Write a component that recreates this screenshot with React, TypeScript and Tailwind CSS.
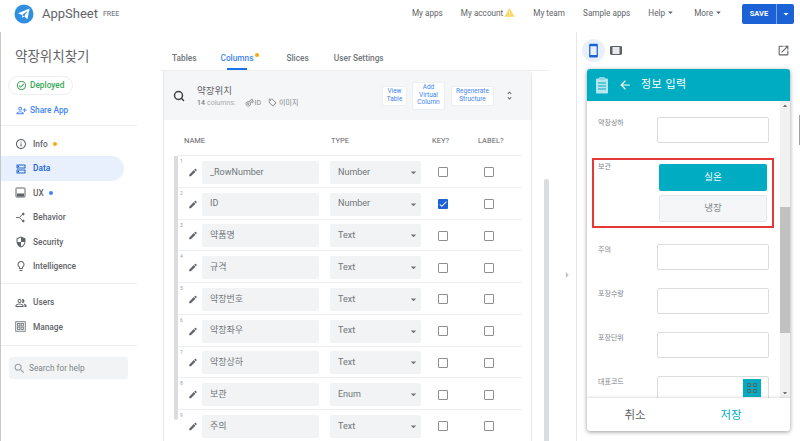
import type { ReactNode } from "react";
import { Search } from "lucide-react";
import {
  MdArrowBack,
  MdArrowDropDown,
  MdArrowDropUp,
  MdArrowRight,
  MdCheck,
  MdEdit,
  MdInfoOutline,
  MdLightbulbOutline,
  MdOpenInNew,
  MdOutlineCheckCircle,
  MdOutlineDns,
  MdOutlineLocalOffer,
  MdOutlineVpnKey,
  MdPersonAddAlt,
  MdSearch,
  MdSecurity,
  MdSmartphone,
  MdUnfoldMore,
  MdWarning,
  MdOutlinePeopleAlt,
} from "react-icons/md";

const FONT = "[font-family:Roboto,'Noto_Sans_CJK_KR',sans-serif]";

const TOP_NAV = ["My apps", "My account", "My team", "Sample apps", "Help", "More"];

const ROWS = [
  { n: 1, name: "_RowNumber", type: "Number" },
  { n: 2, name: "ID", type: "Number", key: true },
  { n: 3, name: "약품명", type: "Text" },
  { n: 4, name: "규격", type: "Text" },
  { n: 5, name: "약장번호", type: "Text" },
  { n: 6, name: "약장좌우", type: "Text" },
  { n: 7, name: "약장상하", type: "Text" },
  { n: 8, name: "보관", type: "Enum" },
  { n: 9, name: "주의", type: "Text" },
];

function Logo() {
  return (
    <svg width="20" height="20" viewBox="0 0 20 20">
      <circle cx="10" cy="10" r="9.5" fill="#2f8fe0" />
      <path d="M4 9.2 15.6 4.6 13.4 15.2 10.2 12.2 8.4 14 8 11z" fill="#fff" />
      <path d="M8 11 13.6 7 10.2 12.2z" fill="#2f8fe0" />
    </svg>
  );
}

function BehaviorIcon() {
  return (
    <svg width="11" height="11" viewBox="0 0 12 12" fill="none" stroke="#5f6368" strokeWidth="1">
      <path d="M1 6h4l3-3.5M5 6l3 3.5" />
      <circle cx="9" cy="2.2" r="1" fill="#5f6368" />
      <circle cx="9" cy="9.8" r="1" fill="#5f6368" />
    </svg>
  );
}

function UxIcon() {
  return (
    <svg width="11" height="11" viewBox="0 0 11 11">
      <rect x="1" y="1" width="9" height="9" rx="0.5" fill="none" stroke="#5f6368" />
      <rect x="2" y="6.5" width="7" height="3" fill="#5f6368" />
    </svg>
  );
}

function ManageIcon() {
  return (
    <svg width="11" height="11" viewBox="0 0 11 11" fill="none" stroke="#70757a" strokeWidth="0.8">
      <rect x="0.7" y="0.7" width="9.6" height="9.6" fill="#eceef0" />
      <rect x="2.5" y="2.5" width="2.4" height="2.4" />
      <rect x="6.1" y="2.5" width="2.4" height="2.4" />
      <rect x="2.5" y="6.1" width="2.4" height="2.4" />
      <rect x="6.1" y="6.1" width="2.4" height="2.4" />
    </svg>
  );
}

function TabletIcon() {
  return (
    <svg width="12" height="9" viewBox="0 0 12 9" className="ml-[5px]">
      <rect x="0.5" y="0.5" width="11" height="8" rx="1" fill="#e8eaed" stroke="#5f6368" />
      <rect x="0" y="0.5" width="2.5" height="8" rx="0.5" fill="#5f6368" />
      <rect x="9.5" y="0.5" width="2.5" height="8" rx="0.5" fill="#5f6368" />
    </svg>
  );
}

function NavItem({ icon, label, dot, active }: { icon: ReactNode; label: string; dot?: string; active?: boolean }) {
  return (
    <div
      className={`flex h-[24.4px] w-[123px] items-center rounded-r-full pl-[14px] text-[8.3px] font-medium ${
        active ? "bg-[#e8f0fe] text-[#1a62d6]" : "text-[#5f6368]"
      }`}
    >
      <span className="flex w-[18px] text-[12px]">{icon}</span>
      {label}
      {dot && <span className={`ml-[5px] h-[4px] w-[4px] rounded-full ${dot}`} />}
    </div>
  );
}

function Sidebar() {
  return (
    <aside className="flex w-[137px] shrink-0 flex-col border-l border-[#c8c8c8]">
      <h1 className="mt-[14px] ml-[14px] text-[13.5px] leading-[20px] font-normal text-[#5f6368]">약장위치찾기</h1>
      <div className="mt-[10px] ml-[7px] flex h-[19px] w-[65px] items-center gap-[3px] rounded-full border border-[#eceef0] pl-[7px] text-[8.3px] font-medium text-[#34a853]">
        <MdOutlineCheckCircle className="text-[11px]" />
        Deployed
      </div>
      <div className="mt-[8px] ml-[15px] flex h-[14px] items-center gap-[3px] text-[8.3px] font-medium text-[#4285f4]">
        <MdPersonAddAlt className="text-[11px]" />
        Share App
      </div>
      <div className="mt-[8px] h-px bg-[#eceef0]" />
      <div className="mt-[6px]">
        <NavItem icon={<MdInfoOutline />} label="Info" dot="bg-[#f9ab00]" />
        <NavItem icon={<MdOutlineDns />} label="Data" active />
        <NavItem icon={<UxIcon />} label="UX" dot="bg-[#4285f4]" />
        <NavItem icon={<BehaviorIcon />} label="Behavior" />
        <NavItem icon={<MdSecurity />} label="Security" />
        <NavItem icon={<MdLightbulbOutline />} label="Intelligence" />
      </div>
      <div className="mt-[5px] h-px bg-[#eceef0]" />
      <div className="mt-[6px]">
        <NavItem icon={<MdOutlinePeopleAlt />} label="Users" />
        <NavItem icon={<ManageIcon />} label="Manage" />
      </div>
      <div className="mt-[6px] h-px bg-[#eceef0]" />
      <div className="mt-[11px] ml-[8px] flex h-[22px] w-[119px] items-center gap-[3px] rounded-[3px] bg-[#f1f3f4] pl-[4px] text-[8.3px] text-[#80868b]">
        <MdSearch className="text-[13px] text-[#9aa0a6]" />
        Search for help
      </div>
    </aside>
  );
}

function Checkbox({ checked }: { checked?: boolean }) {
  return checked ? (
    <span className="flex h-[10px] w-[10px] items-center justify-center rounded-[1px] bg-[#1a62d6] text-[10px] text-white">
      <MdCheck />
    </span>
  ) : (
    <span className="h-[10px] w-[10px] rounded-[1px] border-[1.5px] border-[#8f8f8f]" />
  );
}

function Row({ n, name, type, checked }: { n: number; name: string; type: string; checked?: boolean }) {
  return (
    <div className="relative flex h-[31.75px] w-[344px] shrink-0 items-center border-b border-[#eeeff0] pt-[2px]">
      <span className="absolute top-[2px] left-[2px] text-[5px] leading-[7px] text-[#9aa0a6]">{n}</span>
      <MdEdit className="ml-[10px] w-[10px] text-[11px] text-[#5f6368]" />
      <div className="ml-[4px] flex h-[23px] w-[117px] items-center rounded-[2px] bg-[#f1f3f4] pl-[8px] text-[9px] text-[#70757a]">
        {name}
      </div>
      <div className="ml-[11px] flex h-[23px] w-[91px] items-center justify-between rounded-[2px] bg-[#f1f3f4] pl-[8px] text-[9px] text-[#70757a]">
        {type}
        <MdArrowDropDown className="mr-[1px] text-[13px] text-[#70757a]" />
      </div>
      <span className="ml-[17px] flex">
        <Checkbox checked={checked} />
      </span>
      <span className="ml-[36px] flex">
        <Checkbox />
      </span>
    </div>
  );
}

function HeaderButton({ children, className }: { children: ReactNode; className: string }) {
  return (
    <div
      className={`flex items-center justify-center rounded-[2px] border border-[#eceef0] bg-white text-center text-[6.5px] leading-[7.5px] text-[#4285f4] ${className}`}
    >
      {children}
    </div>
  );
}

function Center() {
  return (
    <main className="relative flex w-[440px] shrink-0 flex-col border-r border-[#e6e7e9]">
      <div className="ml-[23px] w-[390px]">
        <div className="flex h-[39px] items-end border-b border-[#eceef0] text-[8.3px] font-medium text-[#70757a]">
          <span className="mb-[6px] ml-[12px]">Tables</span>
          <div className="relative ml-[24px] flex flex-col items-center self-stretch justify-end">
            <span className="mb-[6px] text-[#4285f4]">Columns</span>
            <span className="absolute bottom-0 h-[2px] w-[20px] bg-[#1a73e8]" />
            <span className="absolute top-[21px] -right-[6px] h-[4px] w-[4px] rounded-full bg-[#f9ab00]" />
          </div>
          <span className="mb-[6px] ml-[33px]">Slices</span>
          <span className="mb-[6px] ml-[25px]">User Settings</span>
        </div>
        <div className="flex">
          <section className="ml-[3px] h-[380px] w-[369px] shrink-0 rounded-tr-[4px] border-x border-[#e6e7e9]">
            <div className="flex h-[49px] items-center bg-[#f5f6f7]">
              <Search size={12} strokeWidth={3} className="ml-[9px] shrink-0 text-[#3c4043]" />
              <div className="ml-[12px] w-[185px]">
                <div className="text-[9.5px] leading-[13px] text-[#5f6368]">약장위치</div>
                <div className="mt-[1px] flex items-center text-[7px] leading-[10px] text-[#80868b]">
                  <span className="font-medium">14</span>
                  <span className="ml-[2px] text-[#a8acb0]">columns:</span>
                  <MdOutlineVpnKey className="ml-[9px] -rotate-45 text-[9px]" />
                  <span className="ml-[1px]">ID</span>
                  <MdOutlineLocalOffer className="ml-[7px] text-[9px]" />
                  <span className="ml-[2px]">이미지</span>
                </div>
              </div>
              <HeaderButton className="h-[20px] w-[25px]">
                View
                <br />
                Table
              </HeaderButton>
              <HeaderButton className="ml-[5px] h-[28px] w-[33px]">
                Add
                <br />
                Virtual
                <br />
                Column
              </HeaderButton>
              <HeaderButton className="ml-[6px] h-[20px] w-[43px]">
                Regenerate
                <br />
                Structure
              </HeaderButton>
              <MdUnfoldMore className="ml-[10px] text-[11px] text-[#5f6368]" />
            </div>
            <div className="ml-[14px] flex h-[36px] w-[344px] items-center border-b border-[#eceef0] pt-[6px] text-[7.5px] text-[#5f6368]">
              <span className="ml-[6px] w-[147px]">NAME</span>
              <span className="w-[101px]">TYPE</span>
              <span className="w-[46px]">KEY?</span>
              <span>LABEL?</span>
            </div>
            <div className="ml-[10px] flex">
              <div className="h-[264px] w-[4px] shrink-0 rounded-b-[2px] bg-[#dadce0]" />
              <div className="flex flex-col">
                {ROWS.map((r) => (
                  <Row key={r.n} n={r.n} name={r.name} type={r.type} checked={r.key} />
                ))}
              </div>
            </div>
          </section>
          <div className="mt-[108px] ml-[12px] h-[300px] w-[5px] rounded-t-[2px] bg-[#dadce0]" />
        </div>
      </div>
      <MdArrowRight className="absolute top-[236px] left-[423px] text-[14px] text-[#bdc1c6]" />
    </main>
  );
}

function Field({ label, children }: { label: string; children?: ReactNode }) {
  return (
    <div className="ml-[11px] flex">
      <span className="mt-[1px] w-[59px] text-[7px] leading-[10px] text-[#80868b]">{label}</span>
      <div className="relative h-[26px] w-[112px] rounded-[2px] border border-[#dadce0] bg-white">{children}</div>
    </div>
  );
}

function ClipboardIcon() {
  return (
    <svg width="14" height="18" viewBox="0 0 14 18">
      <rect x="1" y="2.5" width="12" height="15" rx="1" fill="#b8e6ee" />
      <rect x="4" y="1" width="6" height="3" rx="1" fill="#8fd6e3" />
      <path d="M3 7h8M3 10h8M3 13h8" stroke="#00acc1" strokeWidth="1" />
    </svg>
  );
}

function Preview() {
  return (
    <section className="flex flex-1 flex-col">
      <div className="flex h-[37px] items-center pr-[10px] pl-[5px]">
        <span className="flex h-[23px] w-[23px] items-center justify-center rounded-full bg-[#e8f0fe] text-[15px] text-[#1a62d6]">
          <MdSmartphone />
        </span>
        <TabletIcon />
        <MdOpenInNew className="ml-auto text-[13px] text-[#5f6368]" />
      </div>
      <div className="ml-[10px] flex h-[362px] w-[203px] flex-col overflow-hidden rounded-[3px] bg-white shadow-[0_1px_4px_rgba(0,0,0,0.4)]">
        <div className="flex h-[32px] shrink-0 items-center bg-[#00acc1] pl-[8px] text-white">
          <ClipboardIcon />
          <MdArrowBack className="ml-[9px] text-[14px]" />
          <span className="ml-[9px] text-[11px] tracking-[0.5px]">정보 입력</span>
        </div>
        <div className="flex h-[297px] shrink-0">
          <div className="w-[193px] overflow-hidden pt-[16px]">
            <Field label="약장상하" />
            <div className="mt-[15px] ml-[5px] flex h-[70px] w-[182px] border-2 border-[#e53935] pt-[4px] pl-[4px]">
              <span className="-mt-[2px] w-[61px] text-[7px] leading-[10px] text-[#80868b]">보관</span>
              <div className="flex flex-col gap-[4px]">
                <div className="flex h-[27px] w-[108px] items-center justify-center rounded-[2px] bg-[#00acc1] text-[9.5px] text-white">
                  실온
                </div>
                <div className="flex h-[27px] w-[108px] items-center justify-center rounded-[2px] border border-[#e6e7e9] bg-[#f5f6f7] text-[9.5px] text-[#80868b]">
                  냉장
                </div>
              </div>
            </div>
            <div className="mt-[16px] flex flex-col gap-[18px]">
              <Field label="주의" />
              <Field label="포장수량" />
              <Field label="포장단위" />
              <Field label="대표코드">
                <span className="absolute top-[2px] right-[7px] grid h-[18px] w-[18px] grid-cols-2 place-content-center gap-[1.5px] bg-[#00acc1] px-[4px]">
                  <i className="h-[4px] border border-[#5f6368]" />
                  <i className="h-[4px] border border-[#5f6368]" />
                  <i className="h-[4px] border border-[#5f6368]" />
                  <i className="h-[4px] border border-[#5f6368]" />
                </span>
              </Field>
            </div>
          </div>
          <div className="flex w-[10px] flex-col items-center bg-[#f1f1f1] text-[10px] text-[#505050]">
            <MdArrowDropUp className="h-[10px]" />
            <div className="mt-[96px] h-[126px] w-[10px] bg-[#c1c1c1]" />
            <MdArrowDropDown className="mt-auto h-[10px]" />
          </div>
        </div>
        <div className="z-10 grid h-[33px] w-full grid-cols-[96px_96px] items-center pt-[3px] text-center text-[11.5px] shadow-[0_-1px_2px_rgba(0,0,0,0.12)]">
          <span className="text-[#5f6368]">취소</span>
          <span className="text-[#00acc1]">저장</span>
        </div>
      </div>
    </section>
  );
}

export default function App() {
  return (
    <div className={`relative flex h-[441px] w-[800px] flex-col overflow-hidden bg-white ${FONT}`}>
      <header className="flex h-[32px] shrink-0 items-start">
        <div className="mt-[4px] ml-[14px] flex items-center">
          <Logo />
          <span className="ml-[8px] text-[13px] leading-[20px] text-[#5f6368]">AppSheet</span>
          <span className="mt-[1px] ml-[5px] text-[7px] font-medium text-[#80868b]">FREE</span>
        </div>
        <nav className="mt-[6px] ml-auto flex h-[14px] items-center gap-[18px] text-[8.2px] text-[#5f6368]">
          {TOP_NAV.map((item) => (
            <span key={item} className="flex items-center whitespace-nowrap">
              {item}
              {item === "My account" && <MdWarning className="ml-[1px] text-[11px] text-[#fdd663]" />}
              {(item === "Help" || item === "More") && <MdArrowDropDown className="text-[11px]" />}
            </span>
          ))}
        </nav>
        <div className="mt-[4px] mr-[6px] ml-[18px] flex h-[20px] w-[52px] rounded-[2px] bg-[#1a62d6] text-[7.5px] font-bold text-white">
          <span className="flex w-[35px] items-center justify-center border-r border-[#7aa5e8]">SAVE</span>
          <span className="flex flex-1 items-center justify-center text-[12px]">
            <MdArrowDropDown />
          </span>
        </div>
      </header>
      <div className="flex flex-1 overflow-hidden">
        <Sidebar />
        <Center />
        <Preview />
      </div>
      <span className="absolute top-[115px] right-0 h-[30px] w-px bg-[#9aa0a6]" />
    </div>
  );
}
